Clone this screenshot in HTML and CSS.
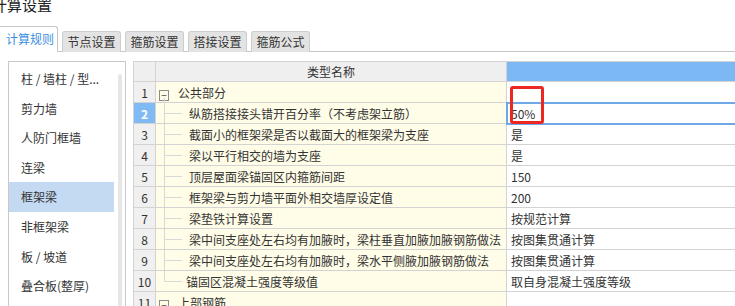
FILE: index.html
```html
<!DOCTYPE html>
<html lang="zh-CN">
<head>
    <meta charset="UTF-8">
    <title>计算设置</title>
    <link rel="stylesheet" href="styles.css">
</head>
<body>
    <div class="page">
        <div class="title">计算设置</div>
        <div class="tabs">
            <div class="tab active">计算规则</div>
            <div class="tab">节点设置</div>
            <div class="tab">箍筋设置</div>
            <div class="tab">搭接设置</div>
            <div class="tab">箍筋公式</div>
        </div>
        <div class="content">
            <div class="side">
                <ul class="side-list">
                    <li>柱 / 墙柱 / 型...</li>
                    <li>剪力墙</li>
                    <li>人防门框墙</li>
                    <li>连梁</li>
                    <li class="selected">框架梁</li>
                    <li>非框架梁</li>
                    <li>板 / 坡道</li>
                    <li>叠合板(整厚)</li>
                </ul>
                <div class="side-scroll"></div>
            </div>
            <div class="grid-wrap">
                <table class="grid">
                    <colgroup>
                        <col class="col-num">
                        <col class="col-name">
                        <col class="col-value">
                    </colgroup>
                    <thead>
                        <tr>
                            <th class="num"></th>
                            <th>类型名称</th>
                            <th class="value-head"></th>
                        </tr>
                    </thead>
                    <tbody>
                        <tr>
                            <td class="num">1</td>
                            <td class="name group open"><span class="toggle">−</span>公共部分</td>
                            <td class="value"></td>
                        </tr>
                        <tr>
                            <td class="num current">2</td>
                            <td class="name child">纵筋搭接接头错开百分率（不考虑架立筋）</td>
                            <td class="value editing">50%</td>
                        </tr>
                        <tr>
                            <td class="num">3</td>
                            <td class="name child">截面小的框架梁是否以截面大的框架梁为支座</td>
                            <td class="value">是</td>
                        </tr>
                        <tr>
                            <td class="num">4</td>
                            <td class="name child">梁以平行相交的墙为支座</td>
                            <td class="value">是</td>
                        </tr>
                        <tr>
                            <td class="num">5</td>
                            <td class="name child">顶层屋面梁锚固区内箍筋间距</td>
                            <td class="value">150</td>
                        </tr>
                        <tr>
                            <td class="num">6</td>
                            <td class="name child">框架梁与剪力墙平面外相交墙厚设定值</td>
                            <td class="value">200</td>
                        </tr>
                        <tr>
                            <td class="num">7</td>
                            <td class="name child">梁垫铁计算设置</td>
                            <td class="value">按规范计算</td>
                        </tr>
                        <tr>
                            <td class="num">8</td>
                            <td class="name child">梁中间支座处左右均有加腋时，梁柱垂直加腋加腋钢筋做法</td>
                            <td class="value">按图集贯通计算</td>
                        </tr>
                        <tr>
                            <td class="num">9</td>
                            <td class="name child">梁中间支座处左右均有加腋时，梁水平侧腋加腋钢筋做法</td>
                            <td class="value">按图集贯通计算</td>
                        </tr>
                        <tr>
                            <td class="num">10</td>
                            <td class="name child last">锚固区混凝土强度等级值</td>
                            <td class="value">取自身混凝土强度等级</td>
                        </tr>
                        <tr>
                            <td class="num">11</td>
                            <td class="name group"><span class="toggle">−</span>上部钢筋</td>
                            <td class="value"></td>
                        </tr>
                    </tbody>
                </table>
            </div>
        </div>
        <div class="mark"></div>
    </div>
</body>
</html>
```

FILE: styles.css
```css
* {
    margin: 0;
    padding: 0;
    box-sizing: border-box;
}

body {
    width: 735px;
    height: 306px;
    overflow: hidden;
    background: #fff;
    font-family: "Noto Sans CJK SC", "Noto Sans", sans-serif;
    font-size: 12px;
    color: #333;
}

.page {
    position: relative;
    height: 306px;
}

.title {
    height: 27px;
    margin-left: -8px;
    margin-top: -5px;
    font-size: 15px;
    line-height: 20px;
    color: #222;
}

/* tabs */
.tabs {
    display: flex;
    align-items: flex-end;
    height: 25px;
    margin-top: 5px;
    border-bottom: 1px solid #c6c6c6;
    margin-left: -2px;
}

.tab {
    width: 59px;
    height: 21px;
    margin-left: 4px;
    margin-bottom: -1px;
    line-height: 20px;
    text-align: center;
    background: #e3e3e3;
    border: 1px solid #cdcdcd;
    border-bottom: none;
    border-radius: 3px 3px 0 0;
    color: #333;
}

.tab.active {
    width: 60px;
    height: 26px;
    margin-left: 0;
    padding-left: 4px;
    line-height: 24px;
    background: #fff;
    border-color: #c6c6c6;
    color: #3b8fe0;
}

/* body */
.content {
    display: flex;
    gap: 7px;
    padding: 9px 0 0 8px;
}

.side {
    display: flex;
    width: 118px;
    height: 260px;
    border: 1px solid #c9c9c9;
    flex-shrink: 0;
}

.side-list {
    list-style: none;
    width: 105px;
    padding-top: 2px;
}

.side-list li {
    height: 29.6px;
    line-height: 29.6px;
    padding-left: 12px;
    white-space: nowrap;
    color: #333;
}

.side-list li.selected {
    background: #c4daf2;
}

.side-scroll {
    width: 4px;
    margin: 12px 0 0 4px;
    background: #e6e6e6;
    border-radius: 2px;
}

.grid-wrap {
    flex-shrink: 0;
}

.grid {
    border-collapse: collapse;
    table-layout: fixed;
    width: 640px;
}

.col-num { width: 22px; }
.col-name { width: 351px; }
.col-value { width: 267px; }

.grid th,
.grid td {
    border: 1px solid #d3d3d3;
    height: 21px;
    padding: 0;
    white-space: nowrap;
    overflow: hidden;
    font-weight: normal;
}

.grid th {
    height: 20px;
    background: #efefef;
    text-align: center;
    color: #333;
}

.grid th.value-head {
    background: #7bb8f4;
}

.grid td.num {
    background: #f0f0f0;
    text-align: center;
    color: #333;
}

.grid td.num.current {
    background: #7fbaf4;
    color: #fff;
    font-weight: bold;
}

.grid td.name {
    position: relative;
    background: #fffde8;
}

.grid td.group {
    padding-left: 3px;
}

.toggle {
    display: inline-block;
    width: 10px;
    height: 11px;
    margin-right: 9px;
    border: 1px solid #8c8c8c;
    font-size: 10px;
    line-height: 8px;
    text-align: center;
    vertical-align: -1px;
    color: #444;
}

.grid td.group.open::before {
    content: "";
    position: absolute;
    left: 8px;
    top: 16px;
    bottom: -1px;
    border-left: 1px solid #d8d8d8;
}

.grid td.child {
    padding-left: 33px;
}

.grid td.child::before {
    content: "";
    position: absolute;
    left: 8px;
    top: -1px;
    bottom: -1px;
    border-left: 1px solid #d8d8d8;
}

.grid td.child.last::before {
    bottom: 50%;
}

.grid td.child.last {
    padding-left: 30px;
}

.grid td.child::after {
    content: "";
    position: absolute;
    left: 8px;
    top: 50%;
    width: 18px;
    border-top: 1px solid #d8d8d8;
}

.grid td.value {
    background: #fff;
    padding-left: 4px;
}

.grid td.value.editing {
    outline: 2px solid #6ea8e6;
    outline-offset: -1px;
}

/* annotation box */
.mark {
    position: absolute;
    left: 510px;
    top: 91px;
    width: 34px;
    height: 38px;
    border: 3px solid #ec2620;
    border-radius: 3px;
}
```
